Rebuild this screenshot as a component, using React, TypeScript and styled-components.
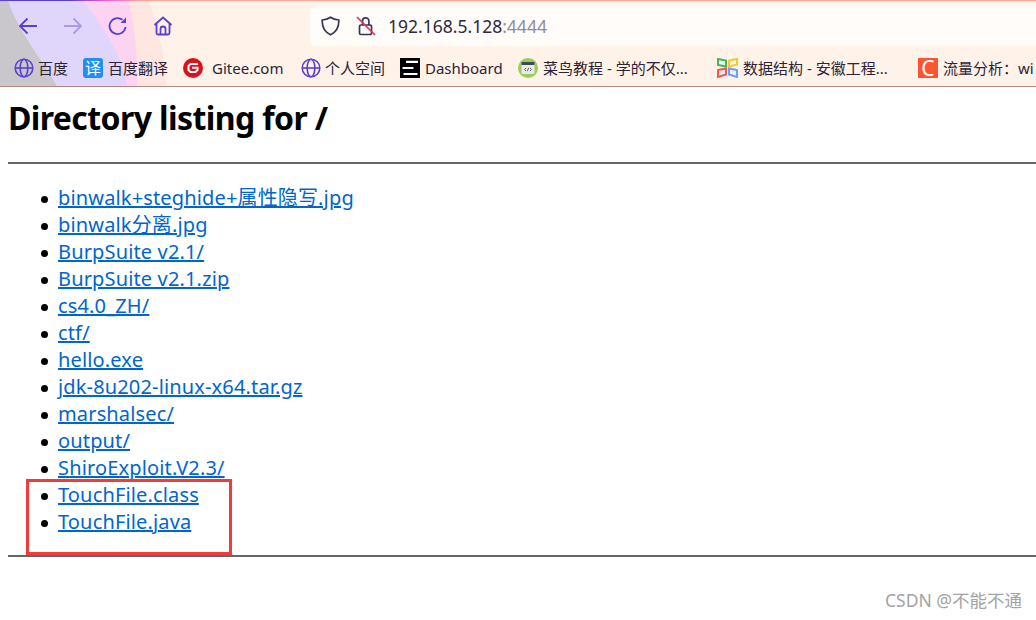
import styled, { createGlobalStyle } from 'styled-components';
import type { ReactNode } from 'react';

const GlobalStyle = createGlobalStyle`
  html, body {
    margin: 0;
    padding: 0;
    background: #fff;
    overflow: hidden;
  }
  body {
    font-family: "Noto Sans", "Noto Sans CJK SC", sans-serif;
  }
`;

const Frame = styled.div`
  position: relative;
  width: 1036px;
  height: 620px;
  overflow: hidden;
`;

const Chrome = styled.header`
  position: relative;
  height: 87px;
  box-sizing: border-box;
  background: #fff2e8;
  border-bottom: 1px solid #b48a80;
  overflow: hidden;

  &::after {
    content: '';
    position: absolute;
    left: 0;
    top: 0;
    width: 100%;
    height: 1px;
    background: linear-gradient(90deg, #5b3fd0 0, #5b3fd0 70px, #f05ad0 105px, #ffa99c 145px);
  }
`;

const ThemeArt = styled.svg`
  position: absolute;
  left: 0;
  top: 0;
`;

const Toolbar = styled.div`
  position: relative;
  display: flex;
  align-items: center;
  height: 48px;
  padding: 4px 0 0 18px;
  box-sizing: border-box;
`;

const NavIcon = styled.svg<{ $faded?: boolean }>`
  flex: none;
  margin-right: 25px;
  fill: none;
  stroke: ${(p) => (p.$faded ? '#ab98e8' : '#5b3fd0')};
  stroke-width: 1.8;
`;

const AddressBar = styled.div`
  display: flex;
  align-items: center;
  height: 40px;
  flex: 1;
  margin-left: 112px;
  padding-left: 11px;
  background: #fffcfa;
  border-radius: 6px 0 0 6px;
`;

const SiteIcon = styled.svg`
  flex: none;
  margin-right: 16px;
  fill: none;
  stroke: #3a3650;
  stroke-width: 1.7;
`;

const Url = styled.span`
  margin-left: -4px;
  font-size: 17.5px;
  color: #2b2a3f;
`;

const Port = styled.span`
  color: #8f8c9c;
`;

const Bookmarks = styled.nav`
  position: relative;
  display: flex;
  align-items: center;
  height: 38px;
  padding: 1px 0 0 14px;
  box-sizing: border-box;
`;

const Bookmark = styled.span<{ $width: number; $gap: number }>`
  display: flex;
  flex: none;
  align-items: center;
  gap: ${(p) => p.$gap}px;
  width: ${(p) => p.$width}px;
  font-size: 15px;
  color: #2b2438;
  white-space: nowrap;
`;

const Badge = styled.span<{ $bg: string; $size: number; $radius: number }>`
  display: flex;
  flex: none;
  align-items: center;
  justify-content: center;
  width: 20px;
  height: 20px;
  border-radius: ${(p) => p.$radius}px;
  background: ${(p) => p.$bg};
  color: #fff;
  font-size: ${(p) => p.$size}px;
  line-height: 20px;
`;

const Page = styled.main`
  position: relative;
  padding: 0 0 0 8px;
  color: #000;
`;

const Title = styled.h1`
  margin: 0;
  padding-top: 10px;
  height: 75px;
  box-sizing: border-box;
  font-size: 32px;
  line-height: 42px;
  font-weight: 700;
  letter-spacing: -0.6px;
`;

const Rule = styled.hr`
  margin: 0;
  border: none;
  height: 2px;
  background: #666;
`;

const List = styled.ul`
  margin: 0;
  padding: 20px 0 20px 33px;
  list-style: none;
`;

const Item = styled.li`
  display: flex;
  align-items: center;
  height: 27px;
  font-size: 20px;
  line-height: 27px;
  letter-spacing: 0.15px;

  &::before {
    content: '';
    flex: none;
    width: 7px;
    height: 7px;
    margin: 4px 10px 0 0;
    border-radius: 50%;
    background: #000;
  }
`;

const FileLink = styled.a`
  color: #0066cc;
  text-decoration: underline;
`;

const Highlight = styled.div`
  position: absolute;
  left: 26px;
  top: 392px;
  width: 206px;
  height: 76px;
  box-sizing: border-box;
  border: 3px solid #ef3b3b;
`;

const Watermark = styled.span`
  position: absolute;
  right: 14px;
  top: 587px;
  font-size: 17.5px;
  color: #a3a3a3;
`;

const files = [
  'binwalk+steghide+属性隐写.jpg',
  'binwalk分离.jpg',
  'BurpSuite v2.1/',
  'BurpSuite v2.1.zip',
  'cs4.0_ZH/',
  'ctf/',
  'hello.exe',
  'jdk-8u202-linux-x64.tar.gz',
  'marshalsec/',
  'output/',
  'ShiroExploit.V2.3/',
  'TouchFile.class',
  'TouchFile.java',
];

const GlobeIcon = () => (
  <svg width="20" height="20" viewBox="0 0 20 20" fill="none" stroke="#5b3fd0" strokeWidth="1.6">
    <circle cx="10" cy="10" r="8.800" />
    <ellipse cx="10" cy="10" rx="3.800" ry="8.800" />
    <path d="M1.500 10h17" />
  </svg>
);

const GiteeIcon = () => (
  <svg width="20" height="20" viewBox="0 0 20 20">
    <circle cx="10" cy="10" r="10" fill="#d7141c" />
    <path d="M15 6H7.500L5.500 8v4l2 2h5l2-2V9.800H9" fill="none" stroke="#fff" strokeWidth="2" />
  </svg>
);

const DashboardIcon = () => (
  <svg width="20" height="20" viewBox="0 0 20 20">
    <rect width="20" height="20" fill="#000" />
    <path d="M6 3.800h12M2.500 10h11M3.500 16h14" stroke="#fff" strokeWidth="2.200" />
  </svg>
);

const RunoobIcon = () => (
  <svg width="20" height="20" viewBox="0 0 20 20">
    <circle cx="10" cy="10" r="10" fill="#96ce5b" />
    <rect x="3.500" y="4" width="13" height="12" rx="1" fill="#e9e9e9" />
    <rect x="3.500" y="4" width="13" height="3" fill="#3f4a52" />
    <path d="M8 10l-1.500 1.500L8 13M12 10l1.500 1.500L12 13M10.700 9.800l-1.400 3.400" fill="none" stroke="#555" strokeWidth=".9" />
  </svg>
);

const BlocksIcon = () => (
  <svg width="21" height="20" viewBox="0 0 21 20">
    <path d="M1 1l8 1.500v6L1 7z" fill="#e9f7ec" stroke="#45b35f" strokeWidth="2" />
    <path d="M20 1l-8 1.500v6l8-2z" fill="#fff7dc" stroke="#f7c531" strokeWidth="2" />
    <path d="M1 12l8-1.500v6L1 19z" fill="#fde9e6" stroke="#ef5a4a" strokeWidth="2" />
    <path d="M20 12l-8-1.500v6l8 2.500z" fill="#e8f0fe" stroke="#6d9ff5" strokeWidth="2" />
  </svg>
);

const bookmarks: { label: string; width: number; gap: number; icon: ReactNode }[] = [
  { label: '百度', width: 69, gap: 4, icon: <GlobeIcon /> },
  { label: '百度翻译', width: 100, gap: 5, icon: <Badge $bg="#1e90f5" $size={16} $radius={3}>译</Badge> },
  { label: 'Gitee.com', width: 118, gap: 9, icon: <GiteeIcon /> },
  { label: '个人空间', width: 99, gap: 4, icon: <GlobeIcon /> },
  { label: 'Dashboard', width: 118, gap: 5, icon: <DashboardIcon /> },
  { label: '菜鸟教程 - 学的不仅...', width: 199, gap: 5, icon: <RunoobIcon /> },
  { label: '数据结构 - 安徽工程...', width: 201, gap: 5, icon: <BlocksIcon /> },
  { label: '流量分析：wi', width: 118, gap: 5, icon: <Badge $bg="#fc5531" $size={21} $radius={0}>C</Badge> },
];

export default function App() {
  return (
    <Frame>
      <GlobalStyle />
      <Chrome>
        <ThemeArt width="170" height="86" viewBox="0 0 170 86">
          <path d="M120 0H148C160 30 165 60 166 86H130z" fill="#ffe6e0" />
          <path d="M80 0H128C135 25 138 60 137 86H120z" fill="#fdd3f2" />
          <path d="M8 0H83C100 25 122 50 127 86H57C40 55 20 35 8 0z" fill="#e0d6fb" />
          <path d="M0 0H8C20 35 40 55 57 86H0z" fill="#cac7cc" />
        </ThemeArt>
        <Toolbar>
          <NavIcon width="20" height="20" viewBox="0 0 20 20">
            <path d="M19 10H2M9.500 2.500L2 10l7.500 7.500" />
          </NavIcon>
          <NavIcon width="20" height="20" viewBox="0 0 20 20" $faded>
            <path d="M1 10h17M10.500 2.500L18 10l-7.500 7.500" />
          </NavIcon>
          <NavIcon width="20" height="20" viewBox="0 0 20 20">
            <path d="M17.500 11a8 8 0 1 1-3-7.200" />
            <path d="M18 1.500V7h-5.500z" fill="#5b3fd0" stroke="none" />
          </NavIcon>
          <NavIcon width="20" height="20" viewBox="0 0 20 20">
            <path d="M1.500 9L10 1.500 18.500 9M3.500 7.500V17a1.500 1.500 0 0 0 1.500 1.500h10a1.500 1.500 0 0 0 1.500-1.500V7.500M7.500 18.500V13a2.500 2.500 0 0 1 5 0v5.500" />
          </NavIcon>
          <AddressBar>
            <SiteIcon width="19" height="20" viewBox="0 0 19 20">
              <path d="M9.500 1.200C7 3 4 3.800 1.200 4c-.3 7 2.300 12 8.300 14.800C15.500 16 18.100 11 17.800 4 15 3.800 12 3 9.500 1.200z" />
            </SiteIcon>
            <SiteIcon width="20" height="20" viewBox="0 0 20 20">
              <path d="M3.500 10.500a1.500 1.500 0 0 1 1.500-1.500h9a1.500 1.500 0 0 1 1.500 1.500V17a1.500 1.500 0 0 1-1.500 1.500H5A1.500 1.500 0 0 1 3.500 17zM6.500 9V5a3.200 3.200 0 0 1 6.400 0v4" />
              <path d="M1 1l18 18" stroke="#ef2d56" />
            </SiteIcon>
            <Url>192.168.5.128<Port>:4444</Port></Url>
          </AddressBar>
        </Toolbar>
        <Bookmarks>
          {bookmarks.map((b) => (
            <Bookmark key={b.label} $width={b.width} $gap={b.gap}>
              {b.icon}
              {b.label}
            </Bookmark>
          ))}
        </Bookmarks>
      </Chrome>
      <Page>
        <Title>Directory listing for /</Title>
        <Rule />
        <List>
          {files.map((name) => (
            <Item key={name}>
              <FileLink href="#">{name}</FileLink>
            </Item>
          ))}
        </List>
        <Rule />
        <Highlight />
      </Page>
      <Watermark>CSDN @不能不通</Watermark>
    </Frame>
  );
}
